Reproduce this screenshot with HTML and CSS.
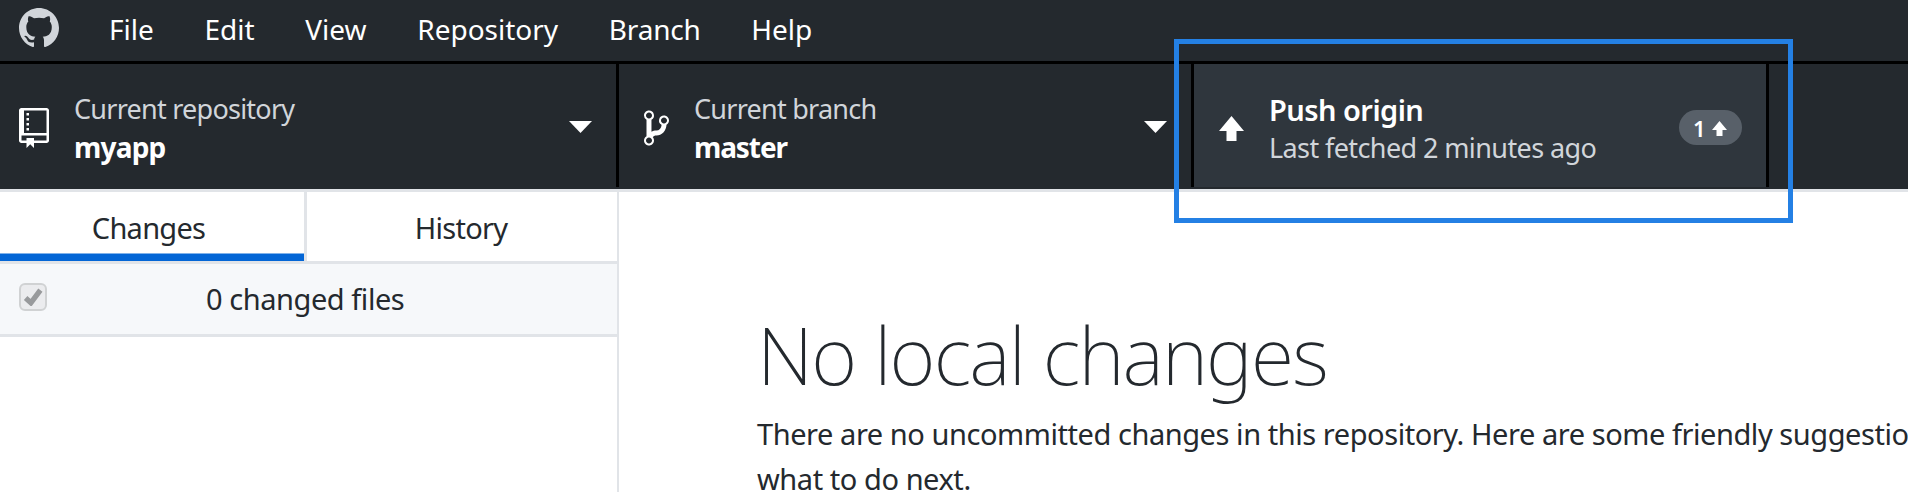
FILE: index.html
```
<!DOCTYPE html>
<html lang="en">
<head>
<meta charset="utf-8">
<title>GitHub Desktop</title>
<link rel="stylesheet" href="styles.css">
</head>
<body>
<header class="menubar">
  <svg class="logo" viewBox="0 0 16 16"><path d="M8 0C3.58 0 0 3.58 0 8c0 3.54 2.29 6.53 5.47 7.59.4.07.55-.17.55-.38 0-.19-.01-.82-.01-1.49-2.01.37-2.53-.49-2.69-.94-.09-.23-.48-.94-.82-1.13-.28-.15-.68-.52-.01-.53.63-.01 1.08.58 1.23.82.72 1.21 1.87.87 2.33.66.07-.52.28-.87.51-1.07-1.78-.2-3.64-.89-3.64-3.95 0-.87.31-1.59.82-2.15-.08-.2-.36-1.02.08-2.12 0 0 .67-.21 2.2.82.64-.18 1.32-.27 2-.27s1.36.09 2 .27c1.53-1.04 2.2-.82 2.2-.82.44 1.1.16 1.92.08 2.12.51.56.82 1.27.82 2.15 0 3.07-1.87 3.75-3.65 3.95.29.25.54.73.54 1.48 0 1.07-.01 1.93-.01 2.2 0 .21.15.46.55.38A8.01 8.01 0 0 0 16 8c0-4.42-3.58-8-8-8z"/></svg>
  <nav class="menu"><span>File</span><span>Edit</span><span>View</span><span>Repository</span><span class="branch-item">Branch</span><span>Help</span></nav>
</header>

<div class="toolbar">
  <div class="tool repo">
    <svg class="icon repo-icon" viewBox="0 0 12 16"><path d="M4 9H3V8h1v1zm0-3H3v1h1V6zm0-2H3v1h1V4zm0-2H3v1h1V2zm8-1v12c0 .55-.45 1-1 1H6v2l-1.500-1.500L3 16v-2H1c-.55 0-1-.45-1-1V1c0-.55.45-1 1-1h10c.55 0 1 .45 1 1zm-1 10H1v2h2v-1h3v1h5v-2zm0-10H2v9h9V1z"/></svg>
    <div class="text"><div class="label">Current repository</div><div class="value">myapp</div></div>
    <svg class="caret" viewBox="0 0 23 12"><path d="M0 0h23L11.500 12z"/></svg>
  </div>
  <div class="tool branch">
    <svg class="icon branch-icon" viewBox="0 0 10 16"><path d="M10 5c0-1.110-.89-2-2-2a1.993 1.993 0 0 0-1 3.720v.3c-.02.52-.23.98-.63 1.380-.4.4-.86.61-1.380.63-.83.02-1.480.16-2 .45V4.720a1.993 1.993 0 0 0-1-3.720C.88 1 0 1.890 0 3a2 2 0 0 0 1 1.720v6.560c-.59.35-1 .99-1 1.720 0 1.110.89 2 2 2 1.110 0 2-.89 2-2 0-.53-.2-1-.53-1.360.09-.06.48-.41.59-.47.25-.11.56-.17.94-.17 1.050-.05 1.950-.45 2.750-1.250S8.950 7.770 9 6.730h-.02C9.590 6.370 10 5.730 10 5zM2 1.800c.66 0 1.200.55 1.200 1.200 0 .65-.55 1.200-1.200 1.200C1.350 4.200.8 3.650.8 3c0-.65.55-1.200 1.200-1.200zm0 12.410c-.66 0-1.200-.55-1.200-1.200 0-.65.55-1.200 1.200-1.200.65 0 1.200.55 1.200 1.200 0 .65-.55 1.200-1.200 1.200zm6-8c-.66 0-1.200-.55-1.200-1.200 0-.65.55-1.200 1.200-1.200.65 0 1.200.55 1.200 1.200 0 .65-.55 1.200-1.200 1.200z"/></svg>
    <div class="text"><div class="label">Current branch</div><div class="value master">master</div></div>
    <svg class="caret" viewBox="0 0 23 12"><path d="M0 0h23L11.500 12z"/></svg>
  </div>
  <div class="tool push">
    <svg class="icon arrow" viewBox="0 0 10 10"><path d="M5 0L0 6h3v4h4V6h3z"/></svg>
    <div class="text"><div class="value title">Push origin</div><div class="label fetched">Last fetched 2 minutes ago</div></div>
    <div class="badge"><span>1</span><svg class="mini-arrow" viewBox="0 0 10 10"><path d="M5 0L0 6h3v4h4V6h3z"/></svg></div>
  </div>
</div>

<main class="body">
  <aside class="sidebar">
    <div class="tabs"><div class="tab active">Changes</div><div class="tab history">History</div></div>
    <div class="files">
      <span class="checkbox"><svg class="check" viewBox="0 0 19 18"><path d="M2.500 10.500L7.500 15 16.500 3" /></svg></span>
      <span class="count">0 changed files</span>
    </div>
  </aside>
  <section class="content">
    <h1>No local changes</h1>
    <p>There are no uncommitted changes in this repository. Here are some friendly suggestions for<br>what to do next.</p>
  </section>
</main>
<div class="highlight"></div>
</body>
</html>
```
FILE: styles.css
```
* { box-sizing: border-box; }
body {
  margin: 0;
  width: 1908px;
  height: 492px;
  overflow: hidden;
  display: flex;
  flex-direction: column;
  position: relative;
  background: #fff;
  color: #24292e;
  font-family: "Noto Sans", "Open Sans", sans-serif;
  font-size: 29px;
}
svg { display: block; fill: #fff; flex: none; }

.menubar {
  height: 64px;
  flex: none;
  display: flex;
  padding-left: 19px;
  background: #24292e;
  border-bottom: 3px solid #000;
}
.logo { width: 40px; height: 40px; margin-top: 8px; fill: #d1d5da; }
.menu {
  display: flex;
  gap: 50.7px;
  margin-left: 50px;
  color: #fff;
  font-size: 28px;
  line-height: 58px;
}
.branch-item { letter-spacing: -0.2px; }

.toolbar {
  height: 128px;
  flex: none;
  display: flex;
  background: #24292e;
  padding-bottom: 2px;
  border-bottom: 3px solid #e1e4e8;
}
.tool {
  height: 123px;
  display: flex;
  border-right: 3px solid #000;
}
.repo { width: 619px; padding: 0 24px 0 19px; }
.branch { width: 575px; padding: 0 24px 0 25px; }
.push { width: 575px; padding: 0 24px 0 25px; background: #2f363d; }
.icon { margin-right: 25px; }
.repo-icon { width: 30px; height: 40px; margin-top: 44px; }
.branch-icon { width: 25px; height: 40px; margin-top: 44px; }
.arrow { width: 25px; height: 25px; margin-top: 52px; }
.text { flex: 1; padding-top: 25px; white-space: nowrap; }
.label {
  color: #d1d5da;
  font-size: 27px;
  line-height: 39px;
  letter-spacing: -0.75px;
}
.value {
  color: #fff;
  font-weight: 700;
  font-size: 28px;
  line-height: 38px;
  letter-spacing: -0.8px;
}
.value.master { letter-spacing: -1.1px; }
.value.title {
  font-size: 29px;
  font-weight: 600;
  line-height: 41px;
  letter-spacing: -0.54px;
}
.label.fetched { line-height: 36px; letter-spacing: -0.6px; }
.caret { width: 23px; height: 12px; margin-top: 57px; }
.badge {
  width: 63px;
  height: 35px;
  margin-top: 46px;
  padding-left: 14px;
  display: flex;
  border-radius: 18px;
  background: #586069;
  color: #fff;
  font-size: 22px;
  font-weight: 600;
  line-height: 37px;
}
.mini-arrow { width: 15px; height: 15px; margin: 11px 0 0 6px; }

.body { flex: 1; display: flex; min-height: 0; }
.sidebar { width: 619px; flex: none; border-right: 2px solid #e1e4e8; }
.tabs { display: flex; height: 72px; border-bottom: 3px solid #e1e4e8; }
.tab {
  flex: 1;
  text-align: center;
  line-height: 72px;
  letter-spacing: -0.75px;
  padding-right: 2px;
}
.tab.active {
  flex: none;
  width: 307px;
  padding-right: 7px;
  border-right: 3px solid #e1e4e8;
  box-shadow: inset 0 -7.5px #0366d6;
}
.files {
  height: 73px;
  display: flex;
  padding-left: 19px;
  background: #f6f8fa;
  border-bottom: 3px solid #e1e4e8;
}
.checkbox {
  width: 28px;
  height: 28px;
  margin-top: 19px;
  padding: 2px;
  border: 2px solid #d0d2d3;
  border-radius: 6px;
  background: #ebecee;
}
.check { width: 20px; height: 19px; fill: none; stroke: #989a9c; stroke-width: 5; }
.count {
  margin-left: 159px;
  line-height: 70px;
  letter-spacing: -0.44px;
}

.content { padding: 83px 0 0 757px; margin-left: -619px; white-space: nowrap; }
h1 {
  margin: 0;
  font-size: 79px;
  font-weight: 250;
  line-height: 160px;
  letter-spacing: -1.8px;
}
.content p { margin: -24px 0 0; line-height: 45px; letter-spacing: -0.44px; }

.highlight {
  position: absolute;
  left: 1174px;
  top: 39px;
  width: 619px;
  height: 184px;
  border: 5px solid #2480e4;
}
```
